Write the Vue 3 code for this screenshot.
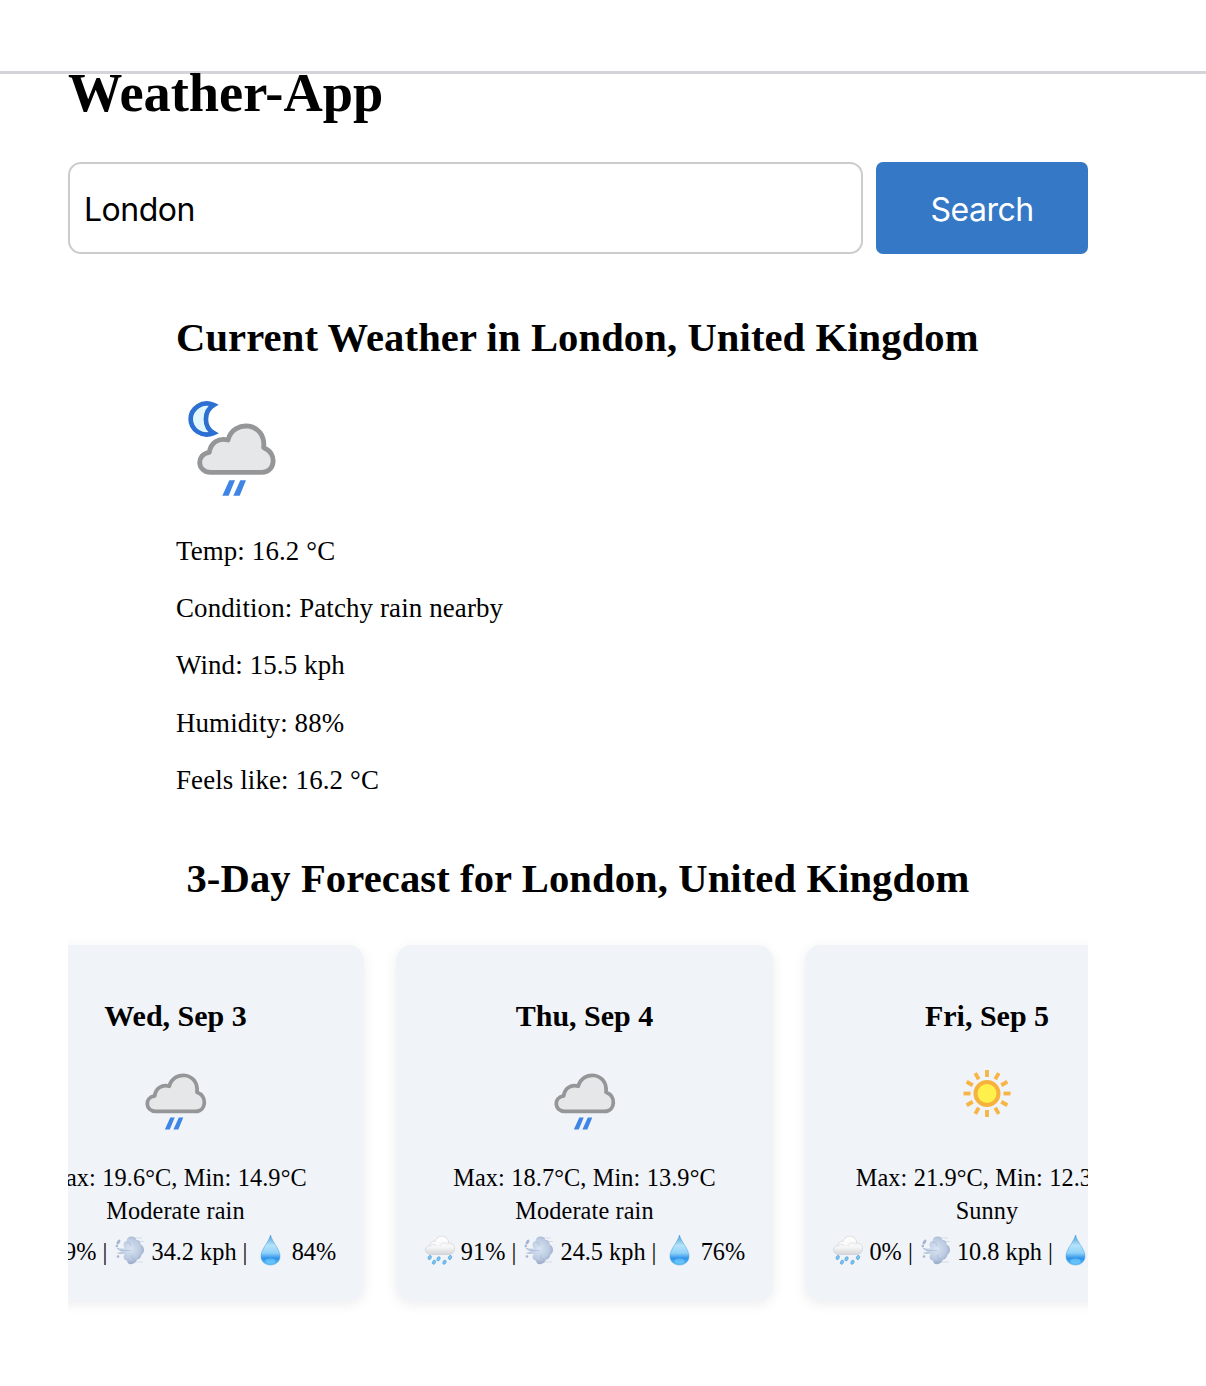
<script setup>
import { ref } from 'vue'

const city = ref('London')

const details = [
  'Temp: 16.2 °C',
  'Condition: Patchy rain nearby',
  'Wind: 15.5 kph',
  'Humidity: 88%',
  'Feels like: 16.2 °C',
]

const days = [
  { date: 'Wed, Sep 3', icon: 'rain', max: '19.6', min: '14.9', text: 'Moderate rain', rain: 89, wind: '34.2', humidity: 84 },
  { date: 'Thu, Sep 4', icon: 'rain', max: '18.7', min: '13.9', text: 'Moderate rain', rain: 91, wind: '24.5', humidity: 76 },
  { date: 'Fri, Sep 5', icon: 'sun', max: '21.9', min: '12.3', text: 'Sunny', rain: 0, wind: '10.8', humidity: 61 },
]

const rays = Array.from({ length: 12 }, (_, i) => i * 30)
</script>

<template>
  <svg class="defs" aria-hidden="true">
    <defs>
      <linearGradient id="gCloud" x1="0" y1="0" x2="0" y2="1">
        <stop offset="0" stop-color="#fff" />
        <stop offset=".6" stop-color="#f6f6f7" />
        <stop offset="1" stop-color="#d3d5d9" />
      </linearGradient>
      <radialGradient id="gWind" cx=".5" cy=".45" r=".6">
        <stop offset="0" stop-color="#d9e4f3" />
        <stop offset=".6" stop-color="#bccbe1" />
        <stop offset="1" stop-color="#8e9fbe" />
      </radialGradient>
      <linearGradient id="gDrop" x1="0" y1="0" x2="0" y2="1">
        <stop offset="0" stop-color="#4a9fda" />
        <stop offset=".35" stop-color="#b5e3fa" />
        <stop offset=".6" stop-color="#8fd2f9" />
        <stop offset=".78" stop-color="#2f93ea" />
        <stop offset="1" stop-color="#5fc4fa" />
      </linearGradient>
      <symbol id="cloud" viewBox="18 48 324 324">
        <path
          d="M122 277C81 277 77 223 118 217C121 189 145 172 174 180C190 117 289 125 281 203C322 217 317 277 276 277Z"
          fill="#e6e7e9" stroke="#949698" stroke-width="14.500" stroke-linejoin="round"
        />
        <path d="M178 301H195L176 347H157ZM211 301H228L209 347H190Z" fill="#3f85e6" />
      </symbol>
      <symbol id="e-rain" viewBox="0 0 32 32">
        <path d="M8 20.5C.8 20.5.8 11.8 7 11.5C7 8 10 6.5 12 7.5C14-.2 26 .8 25.5 9C33.5 9 33.5 20.5 25.5 20.5Z" fill="url(#gCloud)" stroke="#c9cbd0" stroke-width=".6" />
        <path d="M7.5 12C9 9.5 12 10 13 12M17 12C18 8 24 8 25.5 11" fill="none" stroke="#dadce0" stroke-width=".8" />
        <g fill="#7cc3f0" stroke="#479fd9" stroke-width=".6">
          <ellipse v-for="d in [[6.7, 23.5], [15.5, 24.8], [27, 23.5], [11, 28.2], [21.5, 28.2]]" :key="d[0]" :cx="d[0]" :cy="d[1]" rx="1.5" ry="2.2" :transform="`rotate(25 ${d[0]} ${d[1]})`" />
        </g>
      </symbol>
      <symbol id="e-wind" viewBox="0 0 32 32">
        <path d="M20 4H29M24 7.500H31M22 28H30" stroke="#c9d3e2" stroke-width=".7" />
        <path
          d="M3.500 13.500C7 15 9 14.500 12 14.500C9 11 11 7 13.500 7C14 1.500 22 1 23.500 6C26 6 28 8 27.500 10.500C32 12 32 19 28.500 20.500C28 24.500 25 26 24 25.500C22 31.500 14 31.500 14 26.500C10.500 26 9.500 22 12 20C8 20 6 20 3.500 19C6 18.500 8 18 9 17.200C6 17 5 15.500 3.500 13.500Z"
          fill="url(#gWind)"
        />
        <path d="M14 8.500C17 8 18 10 17 12M22 25C19 25 18 23 19 21M7 16.500H18" fill="none" stroke="#96a8c7" stroke-width="1" opacity=".45" />
        <g fill="#a5b4cc"><ellipse cx="5.500" cy="8" rx="1.500" ry="2.600" transform="rotate(35 5.500 8)" /><circle cx="3.800" cy="12" r="1.200" /><circle cx="5" cy="22.500" r="1.300" /></g>
      </symbol>
      <symbol id="e-drop" viewBox="0 0 32 32">
        <path d="M16.500 .8C18 8 26 15 26 22C26 27.500 22 31 16.500 31S7 27.500 7 22C7 15 15 8 16.500 .8Z" fill="url(#gDrop)" />
        <path d="M16.500 1C18 8 26 15 26 22C26 27.500 22 31 16.500 31S7 27.500 7 22C7 15 15 8 16.500 1Z" fill="none" stroke="#3592d8" stroke-width=".7" opacity=".6" />
        <ellipse cx="16.500" cy="27" rx="5" ry="2.500" fill="#8adcff" opacity=".45" />
      </symbol>
    </defs>
  </svg>

  <header class="topbar"></header>
  <main class="app">
    <h1>Weather-App</h1>
    <form class="search" @submit.prevent>
      <input v-model="city" type="text" aria-label="City" />
      <button type="submit">Search</button>
    </form>

    <section class="current">
      <h2>Current Weather in London, United Kingdom</h2>
      <svg class="now" viewBox="18 48 324 324">
        <path d="M131 75C96 60 62 86 62 117C62 149 96 174 131 159C100 141 100 94 131 75Z" fill="#e2f6ff" stroke="#2e70d2" stroke-width="14" stroke-linejoin="miter" />
        <use href="#cloud" x="18" y="48" width="324" height="324" />
      </svg>
      <p v-for="line in details" :key="line">{{ line }}</p>
    </section>

    <h2 class="title">3-Day Forecast for London, United Kingdom</h2>
    <div class="strip">
      <article v-for="day in days" :key="day.date" class="card">
        <h3>{{ day.date }}</h3>
        <svg v-if="day.icon === 'rain'" class="pic" viewBox="20 0 324 324">
          <use href="#cloud" width="324" height="324" />
        </svg>
        <svg v-else class="pic" viewBox="0 0 84 84">
          <circle cx="42" cy="41.500" r="11.5" fill="#fff04c" stroke="#f6b23c" stroke-width="4" />
          <rect v-for="a in rays" :key="a" x="40.100" y="18" width="3.800" height="7" fill="#f6b544" :transform="`rotate(${a} 42 41.5)`" />
        </svg>
        <div class="line">Max: {{ day.max }}°C, Min: {{ day.min }}°C</div>
        <div class="line">{{ day.text }}</div>
        <div class="stats">
          <svg class="emoji"><use href="#e-rain" /></svg> {{ day.rain }}% |
          <svg class="emoji"><use href="#e-wind" /></svg> {{ day.wind }} kph |
          <svg class="emoji"><use href="#e-drop" /></svg> {{ day.humidity }}%
        </div>
      </article>
    </div>
  </main>
</template>

<style>
body {
  margin: 0;
  background: #fff;
  overflow: hidden;
}
</style>

<style scoped>
.defs {
  position: absolute;
  width: 0;
  height: 0;
}
.topbar {
  box-sizing: border-box;
  height: 74px;
  border-bottom: 3px solid #d3d5da;
}
.app {
  display: flex;
  flex-direction: column;
  width: 1020px;
  margin-left: 68px;
  color: #000;
  font-family: "Liberation Serif", "Times New Roman", serif;
}
h1, h2, h3, p {
  margin: 0;
  white-space: nowrap;
}
h1 {
  margin-top: -11px;
  font-size: 54.4px;
  line-height: 60px;
}
.search {
  display: flex;
  gap: 13px;
  height: 92px;
  margin-top: 39px;
}
input, button {
  box-sizing: border-box;
  font-family: Inter, sans-serif;
  font-size: 32px;
  letter-spacing: -0.5px;
}
input {
  width: 795px;
  padding: 2px 14px 0;
  border: 2px solid #ccc;
  border-radius: 13px;
  color: #000;
  background: #fff;
  outline: none;
}
button {
  width: 212px;
  padding: 2px 0 0;
  border: 0;
  border-radius: 7px;
  color: #fff;
  background: #3578c6;
}
h2 {
  font-size: 40.6px;
  letter-spacing: 0.11px;
  line-height: 46px;
}
.current {
  display: flex;
  flex-direction: column;
  width: 804px;
  margin: 61px 0 0 108px;
}
.now {
  width: 108px;
  height: 108px;
  margin: 35px 0 32px;
}
p {
  font-size: 26.9px;
  letter-spacing: 0.13px;
  line-height: 30px;
  margin-bottom: 27.2px;
}
.title {
  margin-top: 34px;
  text-align: center;
}
.strip {
  display: flex;
  gap: 32px;
  margin-top: 23px;
  padding: 20px 0 24px;
  overflow: hidden;
}
.card {
  box-sizing: border-box;
  flex: none;
  display: flex;
  flex-direction: column;
  align-items: center;
  width: 377px;
  height: 356px;
  padding-top: 54px;
  border-radius: 16px;
  background: #f0f3f8;
  box-shadow: 0 3px 13px rgba(0, 0, 0, 0.08);
}
.card:first-child {
  margin-left: -81px;
}
.card:last-child {
  width: 364px;
}
h3 {
  font-size: 30px;
  line-height: 34px;
}
.pic {
  width: 84px;
  height: 84px;
  margin: 19px 0 25px;
}
.line {
  font-size: 24.3px;
  letter-spacing: 0.12px;
  line-height: 33px;
  white-space: nowrap;
}
.stats {
  margin-top: 5px;
  padding-right: 1px;
  font-size: 24.3px;
  line-height: 40px;
  white-space: nowrap;
}
.emoji {
  width: 32px;
  height: 32px;
  vertical-align: -6px;
}
</style>
